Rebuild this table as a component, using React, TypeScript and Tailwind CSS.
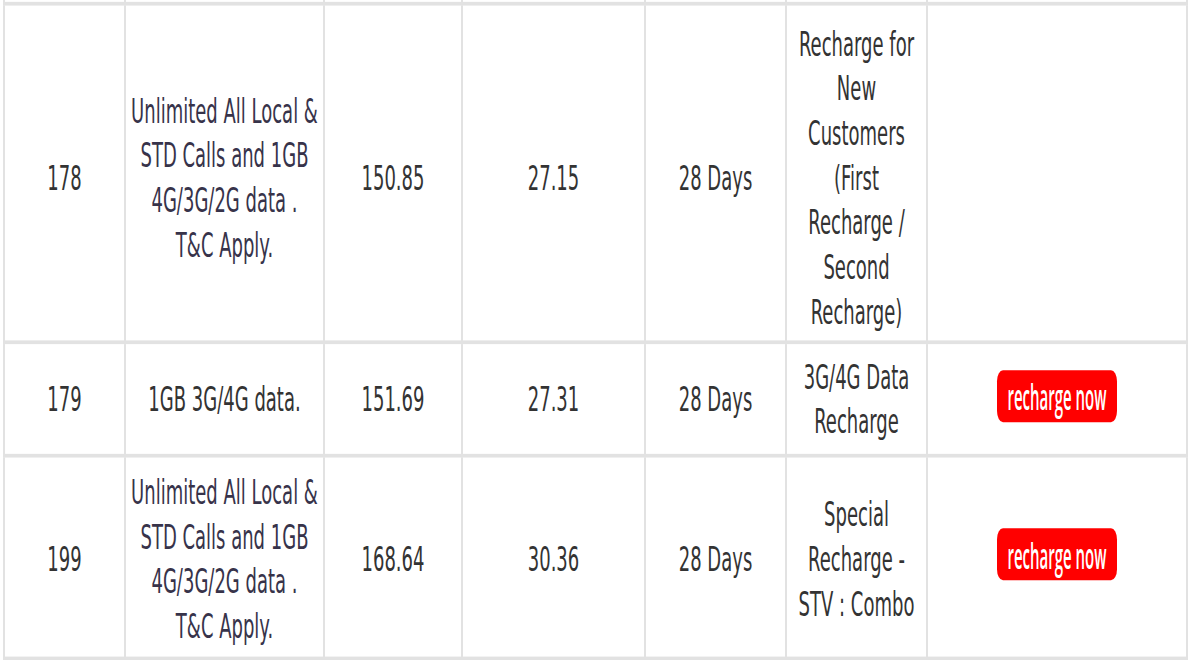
import React from "react";

type Row = {
  mrp: string;
  desc: string[];
  descTint?: boolean;
  talktime: string;
  tax: string;
  validity: string;
  kind: string[];
  button: boolean;
  h: string;
  pad: string;
};

const rows: Row[] = [
  {
    mrp: "178",
    desc: ["Unlimited All Local &", "STD Calls and 1GB", "4G/3G/2G data .", "T&C Apply."],
    descTint: true,
    talktime: "150.85",
    tax: "27.15",
    validity: "28 Days",
    kind: ["Recharge for", "New", "Customers", "(First", "Recharge /", "Second", "Recharge)"],
    button: false,
    h: "h-[182px]",
    pad: "pt-[5px]",
  },
  {
    mrp: "179",
    desc: ["1GB 3G/4G data."],
    talktime: "151.69",
    tax: "27.31",
    validity: "28 Days",
    kind: ["3G/4G Data", "Recharge"],
    button: true,
    h: "h-[61px]",
    pad: "pt-[1px]",
  },
  {
    mrp: "199",
    desc: ["Unlimited All Local &", "STD Calls and 1GB", "4G/3G/2G data .", "T&C Apply."],
    descTint: true,
    talktime: "168.64",
    tax: "30.36",
    validity: "28 Days",
    kind: ["Special", "Recharge -", "STV : Combo"],
    button: true,
    h: "h-[109px]",
    pad: "pt-[3px]",
  },
];

function Lines({ lines }: { lines: string[] }) {
  return (
    <>
      {lines.map((l, i) => (
        <span key={i} className="block whitespace-nowrap">
          {l}
        </span>
      ))}
    </>
  );
}

function RechargeButton() {
  return (
    <button className="inline-flex h-[28px] w-[120px] items-center justify-center rounded-[6px] bg-[#ff0000] text-white">
      <span className="inline-block scale-y-[1.3] font-['Open_Sans',sans-serif] text-[15px] leading-none font-semibold">
        recharge now
      </span>
    </button>
  );
}

const cell = "border-2 border-[#e2e2e2] px-1 align-middle";

export default function App() {
  return (
    <div className="h-[660px] w-[1190px] overflow-hidden bg-white">
      {/* the screenshot is stretched vertically, so the whole table is scaled */}
      <div className="flow-root origin-top scale-y-[1.86]">
        <table className="-mt-[18px] ml-[3px] w-[1185px] table-fixed border-collapse text-center font-['DejaVu_Sans',sans-serif] text-[18px] leading-[24px] text-[#333]">
          <colgroup>
            <col className="w-[121px]" />
            <col className="w-[199px]" />
            <col className="w-[138px]" />
            <col className="w-[183px]" />
            <col className="w-[141px]" />
            <col className="w-[141px]" />
            <col className="w-[260px]" />
          </colgroup>
          <tbody>
            <tr className="h-[19px]">
              <td className={cell}></td>
              <td className={cell}></td>
              <td className={cell}></td>
              <td className={cell}></td>
              <td className={cell}></td>
              <td className={cell}></td>
              <td className={cell}></td>
            </tr>
            {rows.map((r) => (
              <tr key={r.mrp} className={r.h}>
                <td className={`${cell} ${r.pad}`}>{r.mrp}</td>
                <td className={`${cell} ${r.pad} ${r.descTint ? "text-[#37334a]" : ""}`}>
                  <Lines lines={r.desc} />
                </td>
                <td className={`${cell} ${r.pad}`}>{r.talktime}</td>
                <td className={`${cell} ${r.pad}`}>{r.tax}</td>
                <td className={`${cell} ${r.pad}`}>{r.validity}</td>
                <td className={`${cell} ${r.pad}`}>
                  <Lines lines={r.kind} />
                </td>
                <td className={`${cell} pb-[3px]`}>{r.button && <RechargeButton />}</td>
              </tr>
            ))}
          </tbody>
        </table>
      </div>
    </div>
  );
}
